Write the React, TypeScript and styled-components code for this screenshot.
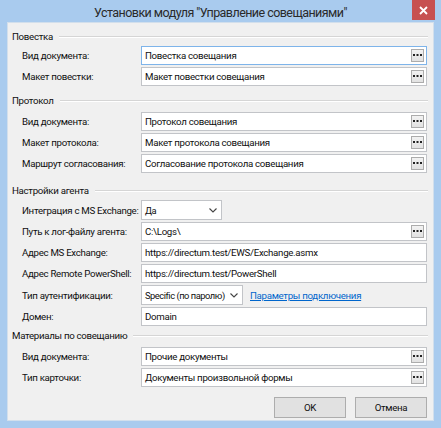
import React, { ReactElement } from 'react';
import styled, { createGlobalStyle } from 'styled-components';

const GlobalStyle = createGlobalStyle`
	html, body {
		margin: 0;
		padding: 0;
		background: #a9cbee;
	}
	* {
		box-sizing: border-box;
	}
`;

const Window = styled.div`
	width: 441px;
	height: 428px;
	background: #a9cbee;
	display: flex;
	flex-direction: column;
	font-family: Roboto, 'Noto Sans', sans-serif;
	font-size: 9.7px;
	letter-spacing: -0.3px;
	color: #0f0f0f;
`;

const TitleBar = styled.div`
	height: 22px;
	display: grid;
	grid-template-columns: 1fr auto 1fr;
	align-items: start;
`;

const Title = styled.div`
	grid-column: 2;
	font-size: 12.5px;
	letter-spacing: -0.55px;
	line-height: 22px;
	color: #2a2a2a;
	padding-top: 2px;
`;

const CloseButton = styled.div`
	grid-column: 3;
	justify-self: end;
	width: 23px;
	height: 20px;
	margin-right: 6px;
	background: #c75050;
	display: flex;
	align-items: center;
	justify-content: center;
`;

const Client = styled.div`
	flex: 1;
	margin: 0 7px 7px 7px;
	background: #f0f0f0;
	border: 1px solid #d2dfec;
	padding: 5px 5px 0 4px;
	display: flex;
	flex-direction: column;
`;

const SectionHeader = styled.div<{ $top: number }>`
	height: 16px;
	margin-top: ${(p) => p.$top}px;
	display: flex;
	align-items: center;
	gap: 6px;

	&::after {
		content: '';
		flex: 1;
		height: 1px;
		background: #d5d5d5;
		box-shadow: 0 1px 0 #ffffff;
	}
`;

const Fields = styled.div<{ $top: number }>`
	margin-top: ${(p) => p.$top}px;
	padding-left: 10px;
	padding-right: 1px;
	display: grid;
	grid-template-columns: 119px 1fr;
	row-gap: 2px;
	align-items: center;
`;

const Label = styled.div`
	white-space: nowrap;
`;

const Input = styled.div<{ $focused?: boolean }>`
	height: 19px;
	background: #ffffff;
	border: 1px solid ${(p) => (p.$focused ? '#7eb4ea' : '#c2c4c8')};
	display: flex;
	align-items: center;
	padding: 0 2px 0 3px;
	white-space: nowrap;
	overflow: hidden;
`;

const InputText = styled.span`
	flex: 1;
`;

const DotsButton = styled.div`
	width: 13px;
	height: 13px;
	border: 1px solid #acacac;
	background: linear-gradient(#f2f2f2, #e2e2e2);
	display: flex;
	align-items: center;
	justify-content: center;
`;

const ComboLine = styled.div`
	display: flex;
	align-items: center;
	gap: 7px;
`;

const Combo = styled.div<{ $width: number }>`
	width: ${(p) => p.$width}px;
	height: 20px;
	background: #ffffff;
	border: 1px solid #c2c4c8;
	display: flex;
	align-items: center;
	justify-content: space-between;
	padding: 0 4px 0 3px;
	white-space: nowrap;
	font-size: 9.3px;
	letter-spacing: -0.45px;
`;

const Link = styled.span`
	color: #0066cc;
	text-decoration: underline;
	white-space: nowrap;
`;

const Footer = styled.div`
	margin-top: 10px;
	padding-right: 1px;
	display: flex;
	justify-content: flex-end;
	gap: 9px;
`;

const Button = styled.div`
	width: 72px;
	height: 21px;
	background: #e1e1e1;
	border: 1px solid #adadad;
	display: flex;
	align-items: center;
	justify-content: center;
`;

function Dots(): ReactElement {
	return (
		<svg width="9" height="3" viewBox="0 0 9 3">
			<rect x="0" y="0" width="2" height="2" fill="#222" />
			<rect x="3.5" y="0" width="2" height="2" fill="#222" />
			<rect x="7" y="0" width="2" height="2" fill="#222" />
		</svg>
	);
}

function Chevron(): ReactElement {
	return (
		<svg width="8" height="5" viewBox="0 0 8 5">
			<polyline points="0.5,0.5 4,4 7.5,0.5" fill="none" stroke="#444" strokeWidth="1.1" />
		</svg>
	);
}

function PickField(props: { value: string; focused?: boolean }): ReactElement {
	return (
		<Input $focused={props.focused}>
			<InputText>{props.value}</InputText>
			<DotsButton>
				<Dots />
			</DotsButton>
		</Input>
	);
}

export default function App(): ReactElement {
	return (
		<Window>
			<GlobalStyle />
			<TitleBar>
				<Title>Установки модуля "Управление совещаниями"</Title>
				<CloseButton>
					<svg width="9" height="9" viewBox="0 0 9 9">
						<path d="M1 1 L8 8 M8 1 L1 8" stroke="#ffffff" strokeWidth="1.8" />
					</svg>
				</CloseButton>
			</TitleBar>
			<Client>
				<SectionHeader $top={0}>Повестка</SectionHeader>
				<Fields $top={2}>
					<Label>Вид документа:</Label>
					<PickField value="Повестка совещания" focused />
					<Label>Макет повестки:</Label>
					<PickField value="Макет повестки совещания" />
				</Fields>

				<SectionHeader $top={6}>Протокол</SectionHeader>
				<Fields $top={4}>
					<Label>Вид документа:</Label>
					<PickField value="Протокол совещания" />
					<Label>Макет протокола:</Label>
					<PickField value="Макет протокола совещания" />
					<Label>Маршрут согласования:</Label>
					<PickField value="Согласование протокола совещания" />
				</Fields>

				<SectionHeader $top={9}>Настройки агента</SectionHeader>
				<Fields $top={2}>
					<Label>Интеграция с MS Exchange:</Label>
					<ComboLine>
						<Combo $width={81}>
							Да
							<Chevron />
						</Combo>
					</ComboLine>
					<Label>Путь к лог-файлу агента:</Label>
					<PickField value="C:\Logs\" />
					<Label>Адрес MS Exchange:</Label>
					<Input>
						<InputText>https://directum.test/EWS/Exchange.asmx</InputText>
					</Input>
					<Label>Адрес Remote PowerShell:</Label>
					<Input>
						<InputText>https://directum.test/PowerShell</InputText>
					</Input>
					<Label>Тип аутентификации:</Label>
					<ComboLine>
						<Combo $width={102}>
							Specific (по паролю)
							<Chevron />
						</Combo>
						<Link>Параметры подключения</Link>
					</ComboLine>
					<Label>Домен:</Label>
					<Input>
						<InputText>Domain</InputText>
					</Input>
				</Fields>

				<SectionHeader $top={1}>Материалы по совещанию</SectionHeader>
				<Fields $top={4}>
					<Label>Вид документа:</Label>
					<PickField value="Прочие документы" />
					<Label>Тип карточки:</Label>
					<PickField value="Документы произвольной формы" />
				</Fields>

				<Footer>
					<Button>OK</Button>
					<Button>Отмена</Button>
				</Footer>
			</Client>
		</Window>
	);
}
